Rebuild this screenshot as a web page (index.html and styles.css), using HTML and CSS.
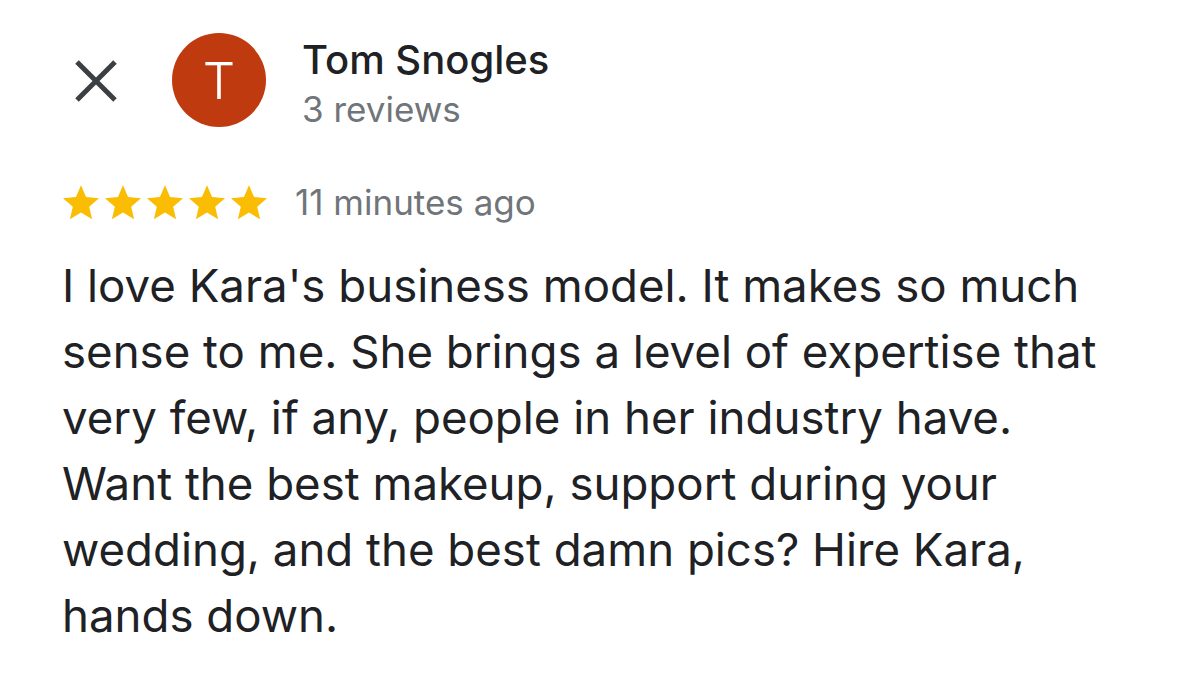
FILE: index.html
```html
<!DOCTYPE html>
<html>
<head>
<meta charset="utf-8">
<link rel="stylesheet" href="styles.css">
</head>
<body>
<div class="card">
  <header class="head">
    <button class="close" aria-label="Close">
      <svg width="42" height="42" viewBox="0 0 42 42"><path d="M2 2 L40 40 M40 2 L2 40" stroke="#3c4043" stroke-width="5" fill="none"/></svg>
    </button>
    <div class="avatar">T</div>
    <div class="who">
      <div class="name">Tom Snogles</div>
      <div class="count">3 reviews</div>
    </div>
  </header>
  <div class="meta">
    <div class="stars">
      <svg viewBox="2 2 20 19.3"><path d="M12 17.27L18.18 21l-1.64-7.03L22 9.24l-7.19-.61L12 2 9.19 8.63 2 9.24l5.46 4.73L5.82 21z"/></svg>
      <svg viewBox="2 2 20 19.3"><path d="M12 17.27L18.18 21l-1.64-7.03L22 9.24l-7.19-.61L12 2 9.19 8.63 2 9.24l5.46 4.73L5.82 21z"/></svg>
      <svg viewBox="2 2 20 19.3"><path d="M12 17.27L18.18 21l-1.64-7.03L22 9.24l-7.19-.61L12 2 9.19 8.63 2 9.24l5.46 4.73L5.82 21z"/></svg>
      <svg viewBox="2 2 20 19.3"><path d="M12 17.27L18.18 21l-1.64-7.03L22 9.24l-7.19-.61L12 2 9.19 8.63 2 9.24l5.46 4.73L5.82 21z"/></svg>
      <svg viewBox="2 2 20 19.3"><path d="M12 17.27L18.18 21l-1.64-7.03L22 9.24l-7.19-.61L12 2 9.19 8.63 2 9.24l5.46 4.73L5.82 21z"/></svg>
    </div>
    <span class="time">11 minutes ago</span>
  </div>
  <p class="body">I love Kara's business model. It makes so much sense to me. She brings a level of expertise that very few, if any, people in her industry have. Want the best makeup, support during your wedding, and the best damn pics? Hire Kara, hands down.</p>
</div>
</body>
</html>
```
FILE: styles.css
```css
html, body {
  margin: 0;
  padding: 0;
  background: #ffffff;
}
body {
  font-family: Inter, "Noto Sans", "Liberation Sans", sans-serif;
  width: 1179px;
  height: 690px;
  overflow: hidden;
}
.card {
  padding: 33px 0 0 62px;
}
.head {
  display: flex;
  align-items: flex-start;
}
.close {
  border: 0;
  background: none;
  padding: 0;
  margin: 27px 0 0 13px;
  width: 42px;
  height: 42px;
  display: flex;
}
.avatar {
  width: 94px;
  height: 94px;
  border-radius: 50%;
  background: #bf3a0e;
  color: #fff;
  font-size: 51px;
  font-weight: 300;
  line-height: 1;
  display: flex;
  align-items: center;
  justify-content: center;
  margin-left: 55px;
}
.who {
  margin: 3px 0 0 36px;
}
.name {
  font-size: 40px;
  color: #202124;
  font-weight: 500;
  line-height: 48px;
}
.count {
  font-size: 35px;
  color: #70757a;
  line-height: 50px;
}
.meta {
  display: flex;
  align-items: center;
  margin-top: 47px;
  height: 42px;
}
.stars {
  display: flex;
  gap: 6px;
  margin-left: 1px;
}
.stars svg {
  width: 36px;
  height: 35px;
  fill: #fbbc04;
}
.time {
  margin-left: 28px;
  font-size: 35px;
  line-height: 42px;
  color: #70757a;
}
.body {
  margin: 30px 0 0;
  width: 1070px;
  font-size: 45.6px;
  line-height: 66px;
  color: #202124;
}
```
